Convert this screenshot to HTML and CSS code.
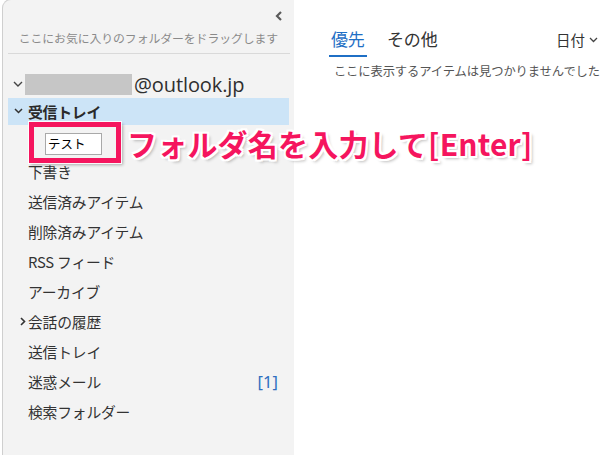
FILE: index.html
```html
<!DOCTYPE html>
<html lang="ja">
<head>
<meta charset="utf-8">
<link rel="stylesheet" href="styles.css">
</head>
<body>
<div class="app">
  <aside class="sidebar">
    <div class="fav-header">
      <div class="collapse-row">
        <svg class="collapse" width="8" height="10" viewBox="0 0 8 10"><polyline points="6,1 2,5 6,9" fill="none" stroke="#5a5a5a" stroke-width="2.2"/></svg>
      </div>
      <div class="fav-text">ここにお気に入りのフォルダーをドラッグします</div>
    </div>
    <div class="divider"></div>
    <div class="account">
      <span class="chev acc"><svg width="10" height="6" viewBox="0 0 10 6"><polyline points="1,1 5,5 9,1" fill="none" stroke="#444" stroke-width="1.4"/></svg></span>
      <span class="masked"></span>
      <span class="domain">@outlook.jp</span>
    </div>
    <ul class="folders">
      <li class="folder selected"><span class="chev"><svg width="9" height="6" viewBox="0 0 9 6"><polyline points="1,1 4.5,4.5 8,1" fill="none" stroke="#333" stroke-width="1.5"/></svg></span><span class="name">受信トレイ</span></li>
      <li class="folder newfolder"><span class="rename">テスト</span></li>
      <li class="folder"><span class="chev"></span><span class="name">下書き</span></li>
      <li class="folder"><span class="chev"></span><span class="name">送信済みアイテム</span></li>
      <li class="folder"><span class="chev"></span><span class="name">削除済みアイテム</span></li>
      <li class="folder"><span class="chev"></span><span class="name">RSS フィード</span></li>
      <li class="folder"><span class="chev"></span><span class="name">アーカイブ</span></li>
      <li class="folder"><span class="chev right"><svg width="6" height="9" viewBox="0 0 6 9"><polyline points="1,1 4.5,4.5 1,8" fill="none" stroke="#333" stroke-width="1.6"/></svg></span><span class="name">会話の履歴</span></li>
      <li class="folder"><span class="chev"></span><span class="name">送信トレイ</span></li>
      <li class="folder"><span class="chev"></span><span class="name">迷惑メール</span><span class="count">[1]</span></li>
      <li class="folder"><span class="chev"></span><span class="name">検索フォルダー</span></li>
    </ul>
  </aside>
  <main class="content">
    <div class="tabbar">
      <span class="tab active">優先</span>
      <span class="tab">その他</span>
      <span class="sort">日付<svg width="9" height="6" viewBox="0 0 9 6"><polyline points="1,1 4.5,4.5 8,1" fill="none" stroke="#444" stroke-width="1.3"/></svg></span>
    </div>
    <p class="empty">ここに表示するアイテムは見つかりませんでした</p>
  </main>
  <div class="callout-box"></div>
  <div class="callout-text">フォルダ名を入力して[Enter]</div>
</div>
</body>
</html>
```
FILE: styles.css
```css
* { box-sizing: border-box; }
html, body { margin: 0; padding: 0; background: #fff; }
body {
  width: 600px;
  height: 455px;
  overflow: hidden;
  font-family: "Noto Sans CJK JP", "Noto Sans", sans-serif;
  color: #333;
}
.app {
  position: relative;
  display: flex;
  width: 600px;
  height: 455px;
}
.sidebar {
  width: 294px;
  margin-left: 2px;
  margin-top: -1px;
  height: 456px;
  background: #f3f3f3;
  border-left: 1px solid #cfcfcf;
  border-top: 1px solid #cfcfcf;
  border-top-left-radius: 9px;
}
.fav-header {
  height: 53px;
  padding-top: 11px;
}
.collapse-row {
  display: flex;
  justify-content: flex-end;
  padding-right: 11px;
  height: 11px;
}
.collapse { display: block; }
.fav-text {
  margin-top: 7px;
  font-size: 11.9px;
  line-height: 18px;
  color: #8a8a8a;
  text-align: center;
  letter-spacing: -0.1px;
}
.divider {
  height: 1px;
  background: #d9d9d9;
  margin: 0 4px 0 5px;
}
.account {
  display: flex;
  align-items: center;
  height: 28px;
  margin-top: 16px;
}
.chev {
  width: 20px;
  flex: none;
  display: flex;
  justify-content: center;
  align-items: center;
}
.chev svg { display: block; }
.chev.acc { width: 22px; justify-content: flex-start; padding-left: 10px; }
.chev.right { justify-content: flex-end; padding-right: 2px; }
.masked {
  width: 107px;
  height: 21px;
  background: #c6c6c6;
}
.domain {
  font-family: "Open Sans", "Noto Sans", sans-serif;
  font-size: 20px;
  color: #2f2f2f;
  margin-left: 2px;
  letter-spacing: -0.1px;
}
.folders {
  list-style: none;
  margin: 0;
  padding: 0;
}
.folder {
  display: flex;
  align-items: center;
  height: 30px;
  padding-bottom: 3px;
  margin: 0 5px;
  font-size: 14.8px;
  color: #333;
}
.folder .name { letter-spacing: -0.2px; }
.folder.selected {
  height: 27px;
  margin-bottom: 3px;
  padding-bottom: 1px;
  background: #cce4f7;
  font-weight: 700;
  color: #2a2a2a;
}
.folder.selected .chev { justify-content: flex-start; padding-left: 6px; }
.newfolder { padding-left: 37px; padding-bottom: 0; }
.rename {
  display: flex;
  align-items: center;
  width: 57px;
  height: 22px;
  margin-top: 1px;
  padding-left: 2px;
  border: 1px solid #a9a9a9;
  background: #fff;
  font-size: 12.5px;
  color: #000;
}
.count {
  margin-left: auto;
  margin-right: 11px;
  font-family: "Noto Sans", sans-serif;
  color: #2f6fc0;
  font-size: 16.5px;
}
.content {
  flex: 1;
  padding-left: 35px;
  position: relative;
}
.tabbar {
  display: flex;
  align-items: flex-end;
  height: 57px;
  padding-top: 26px;
}
.tab {
  font-size: 17px;
  line-height: 25px;
  height: 31px;
  padding: 0 2px;
  color: #333;
}
.tab.active {
  color: #1f6fc5;
  border-bottom: 2px solid #1f6fc5;
}
.tab + .tab { margin-left: 18px; }
.sort {
  margin-left: auto;
  align-self: flex-start;
  margin-top: 3px;
  display: flex;
  align-items: center;
  gap: 4px;
  font-size: 14.5px;
  line-height: 22px;
  color: #333;
  margin-right: 2px;
}
.empty {
  margin: 5px 0 0 5px;
  font-size: 12.3px;
  line-height: 18px;
  color: #555;
  white-space: nowrap;
  letter-spacing: -0.1px;
}
.callout-box {
  position: absolute;
  left: 29px;
  top: 122px;
  width: 92px;
  height: 41px;
  border: 5px solid #f5155e;
  box-shadow: 0 0 0 1px rgba(255,255,255,0.9), 2px 2px 3px rgba(0,0,0,0.3);
}
.callout-text {
  position: absolute;
  left: 127px;
  top: 122px;
  font-size: 30px;
  line-height: 42px;
  font-weight: 700;
  color: #f5155e;
  white-space: nowrap;
  letter-spacing: 0.2px;
  text-shadow:
    2px 0 0 #fff, -2px 0 0 #fff, 0 2px 0 #fff, 0 -2px 0 #fff,
    2px 2px 0 #fff, -2px -2px 0 #fff, 2px -2px 0 #fff, -2px 2px 0 #fff,
    3px 3px 3px rgba(0,0,0,0.25);
}
```
